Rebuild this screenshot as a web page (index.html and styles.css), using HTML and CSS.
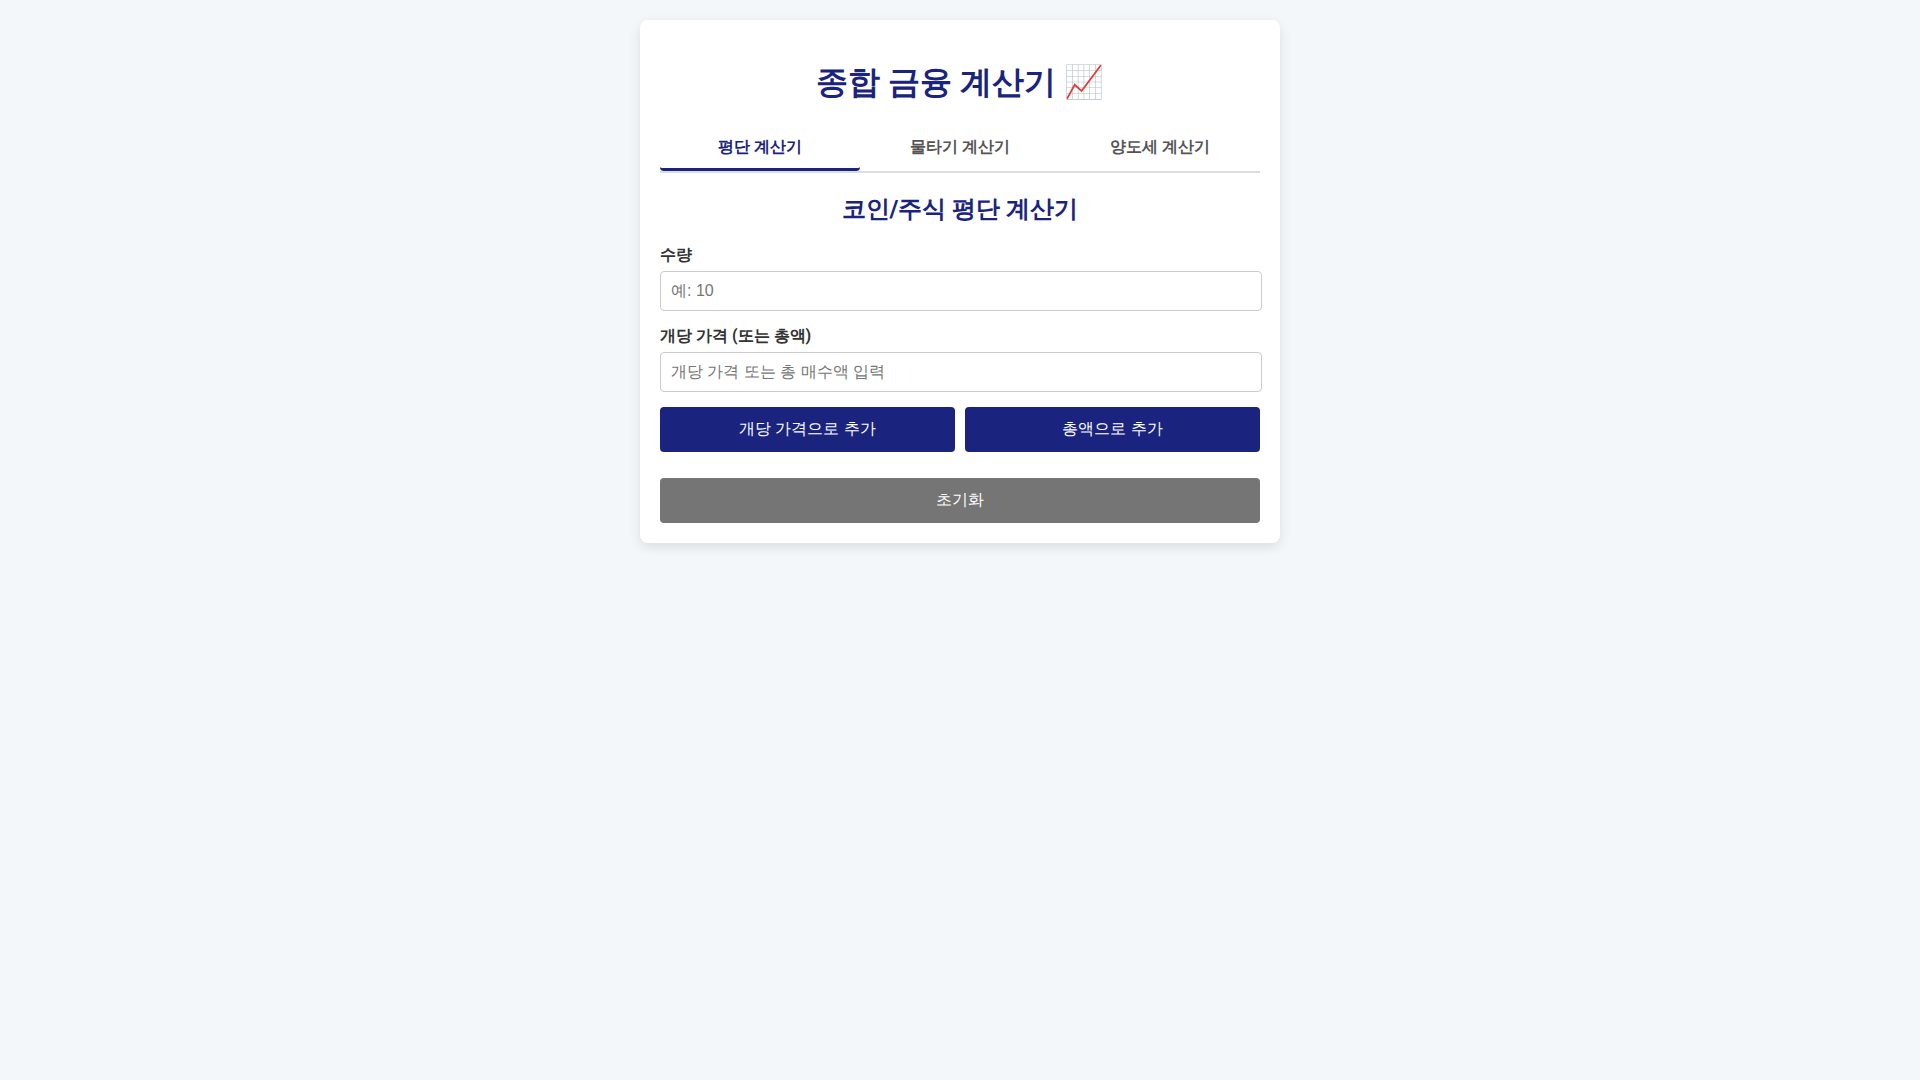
FILE: index.html
```html
<!DOCTYPE html>
<html lang="ko">
<head>
<meta charset="UTF-8">
<meta name="viewport" content="width=device-width, initial-scale=1">
<title>종합 금융 계산기</title>
<link rel="stylesheet" href="styles.css">
</head>
<body>
<main class="container">
  <h1 class="title">종합 금융 계산기 📈</h1>
  <div class="tabs">
    <button type="button" class="tab active">평단 계산기</button>
    <button type="button" class="tab">물타기 계산기</button>
    <button type="button" class="tab">양도세 계산기</button>
  </div>
  <section>
    <h2 class="subtitle">코인/주식 평단 계산기</h2>
    <div class="field">
      <label for="qty">수량</label>
      <input type="number" id="qty" placeholder="예: 10">
    </div>
    <div class="field">
      <label for="price">개당 가격 (또는 총액)</label>
      <input type="number" id="price" placeholder="개당 가격 또는 총 매수액 입력">
    </div>
    <div class="actions">
      <button type="button" class="btn">개당 가격으로 추가</button>
      <button type="button" class="btn">총액으로 추가</button>
    </div>
    <button type="button" class="btn reset">초기화</button>
  </section>
</main>
</body>
</html>
```

FILE: styles.css
```css
body {
  margin: 0;
  padding: 20px;
  background: #f4f7f9;
  color: #333;
  font-family: Roboto, sans-serif;
  font-size: 16px;
}

.container {
  max-width: 600px;
  margin: 0 auto;
  padding: 20px;
  background: #fff;
  border-radius: 8px;
  box-shadow: 0 4px 12px rgba(0, 0, 0, 0.1);
}

.title,
.subtitle {
  color: #1a237e;
  text-align: center;
}

.title {
  margin: 21px 0 22px;
  font-size: 32px;
}

.subtitle {
  margin: 20px 0;
  font-size: 24px;
}

.tabs {
  display: flex;
  margin-bottom: 20px;
  border-bottom: 2px solid #ddd;
}

.tab {
  flex: 1;
  padding: 10px;
  border: 0;
  border-bottom: 3px solid transparent;
  border-radius: 4px;
  background: none;
  color: #555;
  font: bold 16px "Liberation Sans", Arial, sans-serif;
}

.tab.active {
  border-bottom-color: #1a237e;
  color: #1a237e;
}

.field {
  margin-bottom: 15px;
}

.field label {
  display: block;
  margin-bottom: 5px;
  font-weight: bold;
}

.field input {
  width: calc(100% - 20px);
  padding: 10px;
  border: 1px solid #ccc;
  border-radius: 4px;
  font: 16px "Liberation Sans", Arial, sans-serif;
}

.actions {
  display: flex;
  gap: 10px;
}

.btn {
  flex: 1;
  padding: 12px;
  border: 0;
  border-radius: 4px;
  background: #1a237e;
  color: #fff;
  font: 16px "Liberation Sans", Arial, sans-serif;
}

.reset {
  width: 100%;
  margin-top: 26px;
  background: #757575;
}
```
